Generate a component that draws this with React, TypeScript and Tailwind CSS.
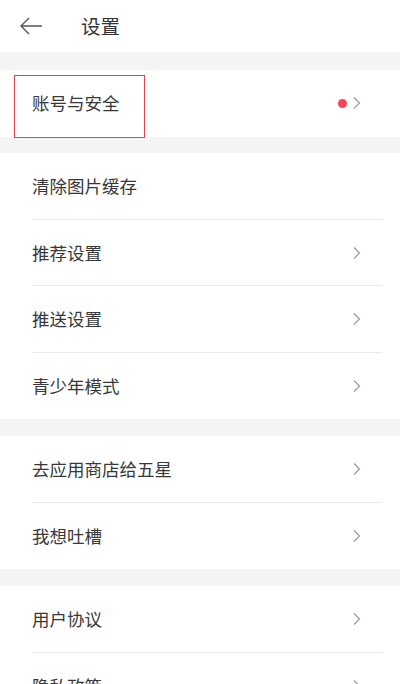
const font = { fontFamily: '"Noto Sans CJK SC", "Noto Sans", sans-serif' };

const Chevron = () => (
  <svg width="10" height="14" viewBox="0 0 10 14" fill="none" className="shrink-0">
    <path d="M2 1.5 L7.5 7 L2 12.5" stroke="#9a9a9a" strokeWidth="1.2" />
  </svg>
);

type Item = { label: string; arrow?: boolean; dot?: boolean; boxed?: boolean };

const Row = ({ item, last }: { item: Item; last: boolean }) => (
  <div className="relative flex h-[66.5px] items-center pl-8 pr-[38px]">
    {item.boxed && (
      <div className="pointer-events-none absolute left-[14px] top-[5px] h-[63px] w-[131px] border border-[#e8434b]" />
    )}
    <span className="flex-1 text-[17.5px] text-[#383838]">{item.label}</span>
    {item.dot && <span className="mr-[5px] h-[9px] w-[9px] rounded-full bg-[#f6474f]" />}
    {item.arrow && <Chevron />}
    {!last && <div className="absolute bottom-0 left-8 right-[18px] h-px bg-[#e9e9e9]" />}
  </div>
);

const Section = ({ items }: { items: Item[] }) => (
  <div className="bg-white">
    {items.map((it, i) => (
      <Row key={it.label} item={it} last={i === items.length - 1} />
    ))}
  </div>
);

export default function App() {
  return (
    <div className="h-[684px] w-[400px] overflow-hidden bg-[#f4f4f4]" style={font}>
      <div className="flex h-[52px] items-center bg-white">
        <svg width="26" height="20" viewBox="0 0 26 20" fill="none" className="ml-[18px]">
          <path d="M24 10 H3 M11 2 L3 10 L11 18" stroke="#555" strokeWidth="1.4" />
        </svg>
        <span className="ml-[37px] text-[19.5px] text-[#333]">设置</span>
      </div>
      <div className="flex flex-col gap-[17px] pt-[18px]">
        <div className="h-[66px] overflow-visible">
          <Section items={[{ label: "账号与安全", arrow: true, dot: true, boxed: true }]} />
        </div>
        <Section
          items={[
            { label: "清除图片缓存" },
            { label: "推荐设置", arrow: true },
            { label: "推送设置", arrow: true },
            { label: "青少年模式", arrow: true },
          ]}
        />
        <Section
          items={[
            { label: "去应用商店给五星", arrow: true },
            { label: "我想吐槽", arrow: true },
          ]}
        />
        <Section
          items={[
            { label: "用户协议", arrow: true },
            { label: "隐私政策", arrow: true },
          ]}
        />
      </div>
    </div>
  );
}
